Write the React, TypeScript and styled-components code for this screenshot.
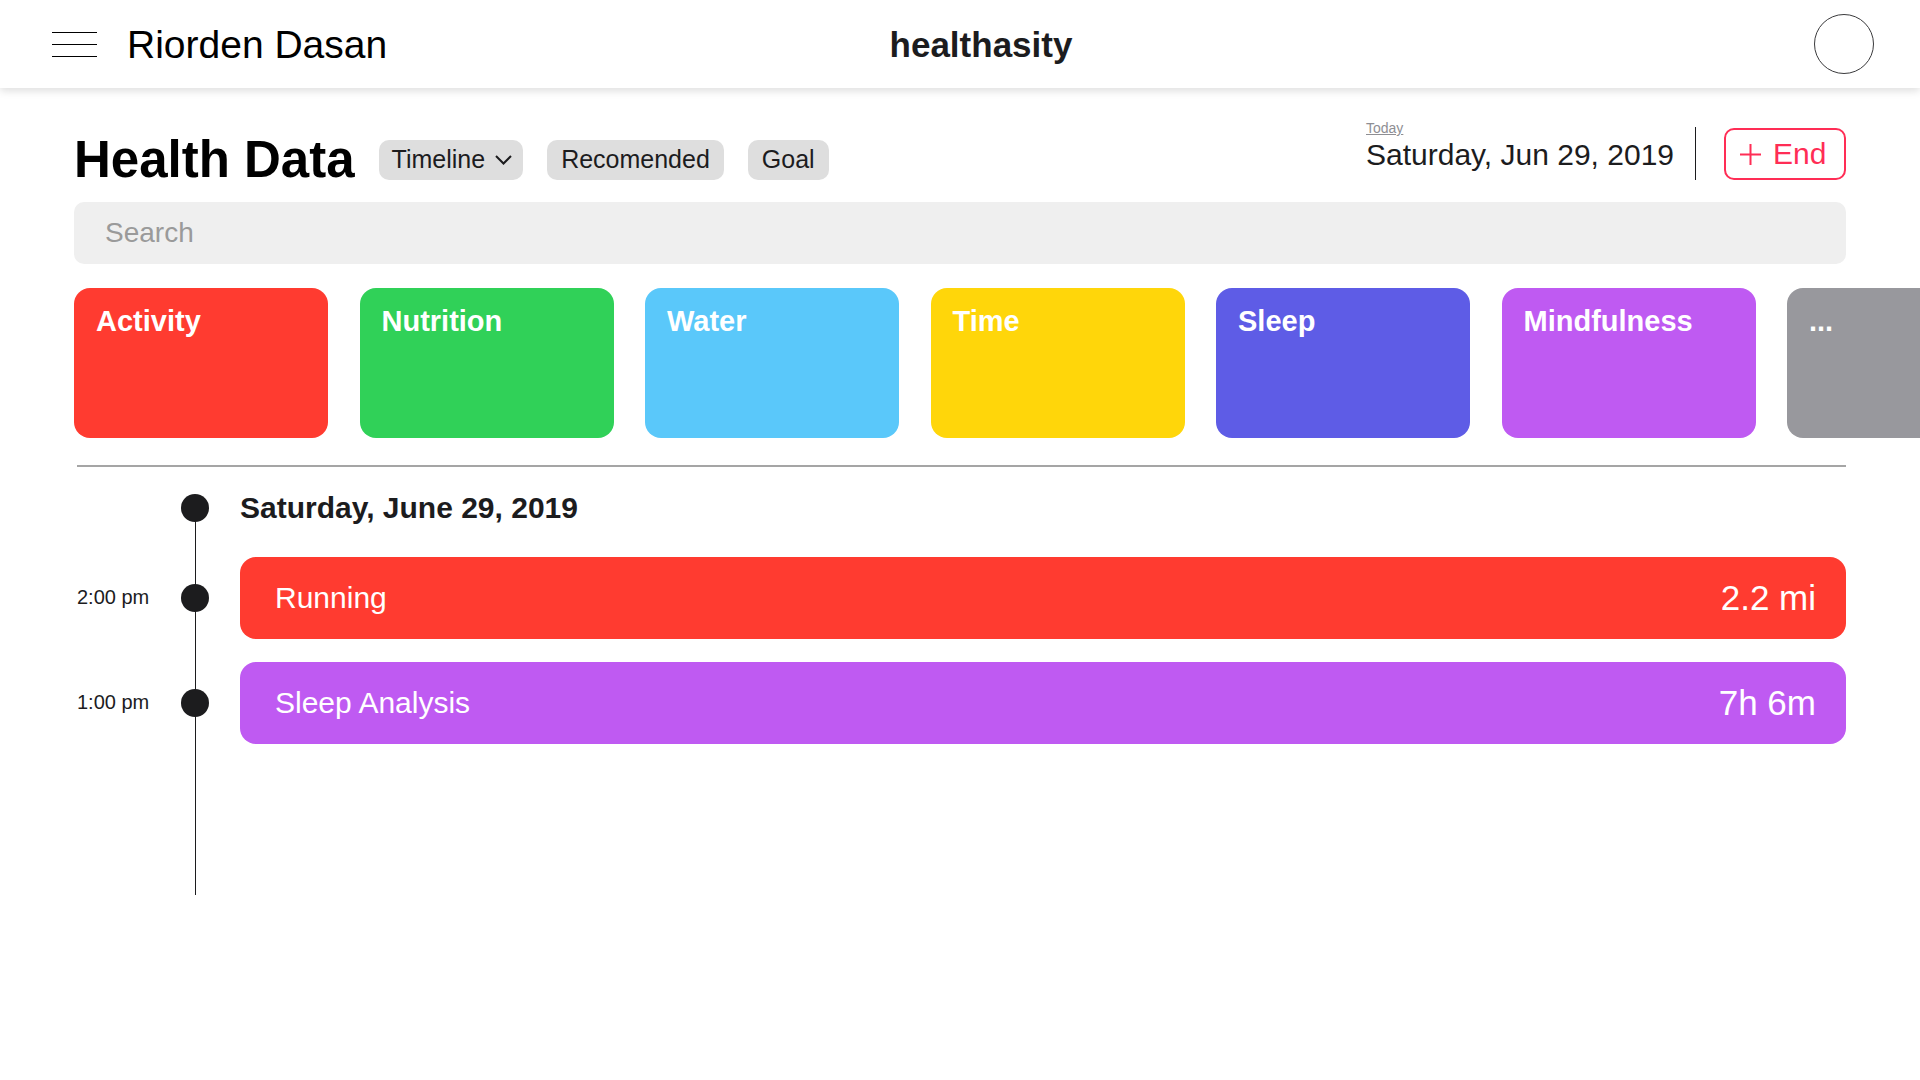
import React from "react";
import styled, { createGlobalStyle } from "styled-components";

const GlobalStyle = createGlobalStyle`
  html, body {
    margin: 0;
    padding: 0;
    background: #ffffff;
    font-family: "Liberation Sans", Arial, Helvetica, sans-serif;
    color: #1c1c1e;
    overflow-x: hidden;
  }
  * { box-sizing: border-box; }
`;

const Page = styled.div`
  min-height: 1080px;
  background: #ffffff;
`;

const Header = styled.header`
  position: relative;
  z-index: 2;
  height: 88px;
  display: grid;
  grid-template-columns: 1fr auto 1fr;
  align-items: center;
  padding: 0 46px 0 52px;
  background: #ffffff;
  box-shadow: 0 3px 8px rgba(0, 0, 0, 0.13);
`;

const HeaderLeft = styled.div`
  display: flex;
  align-items: center;
  gap: 30px;
`;

const MenuButton = styled.button`
  display: flex;
  padding: 0;
  border: none;
  background: none;
  cursor: pointer;
`;

const UserName = styled.span`
  font-size: 39px;
  line-height: 1;
  color: #000000;
  margin-top: 1px;
`;

const Brand = styled.span`
  margin-left: 36px;
  font-size: 35px;
  font-weight: 700;
  line-height: 1;
  color: #1c1c1e;
`;

const Avatar = styled.div`
  justify-self: end;
  width: 60px;
  height: 60px;
  border-radius: 50%;
  border: 1px solid #3a3a3c;
`;

const Main = styled.main`
  padding: 33px 74px 0;
`;

const TitleRow = styled.div`
  display: flex;
  justify-content: space-between;
  align-items: flex-start;
`;

const LeftGroup = styled.div`
  display: flex;
  align-items: center;
  margin-top: 13px;
`;

const Title = styled.h1`
  margin: 0 24px 0 0;
  font-size: 51px;
  font-weight: 700;
  line-height: 1;
  color: #000000;
`;

const Chips = styled.div`
  display: flex;
  gap: 24px;
`;

const Chip = styled.button<{ $dropdown?: boolean }>`
  display: flex;
  align-items: center;
  gap: 10px;
  height: 40px;
  padding: ${(p) => (p.$dropdown ? "0 11px 0 13px" : "0 14px")};
  border: none;
  border-radius: 10px;
  background: #dedede;
  font-family: inherit;
  font-size: 25px;
  line-height: 1;
  color: #1c1c1e;
  cursor: pointer;
`;

const RightGroup = styled.div`
  display: flex;
  align-items: flex-start;
`;

const DateBlock = styled.div`
  display: flex;
  flex-direction: column;
  align-items: flex-start;
`;

const TodayLink = styled.a`
  font-size: 14px;
  line-height: 1;
  color: #8e8e93;
  text-decoration: underline;
`;

const DateText = styled.span`
  margin-top: 5px;
  font-size: 30px;
  line-height: 1;
  color: #1c1c1e;
`;

const VDivider = styled.div`
  width: 1px;
  height: 53px;
  margin: 6px 28px 0 21px;
  background: #1c1c1e;
`;

const EndButton = styled.button`
  display: flex;
  align-items: center;
  gap: 12px;
  width: 122px;
  height: 52px;
  margin-top: 7px;
  padding: 0 0 0 14px;
  border: 2px solid #ff2d55;
  border-radius: 10px;
  background: #ffffff;
  font-family: inherit;
  font-size: 30px;
  line-height: 1;
  color: #ff2d55;
  cursor: pointer;
`;

const SearchInput = styled.input`
  display: block;
  width: 100%;
  height: 62px;
  margin-top: 17px;
  padding: 0 31px;
  border: none;
  border-radius: 10px;
  background: #efefef;
  font-family: inherit;
  font-size: 28px;
  color: #1c1c1e;
  outline: none;
  &::placeholder {
    color: #9a9a9a;
  }
`;

const CardRow = styled.div`
  display: flex;
  gap: 31.5px;
  margin: 24px -74px 0 0;
  overflow: hidden;
`;

const Card = styled.div<{ $color: string }>`
  flex: 0 0 254px;
  height: 150px;
  padding: 17px 22px;
  border-radius: 16px;
  background: ${(p) => p.$color};
  color: #ffffff;
  font-size: 29px;
  font-weight: 700;
`;

const Separator = styled.hr`
  height: 2px;
  margin: 27px 0 0 3px;
  border: none;
  background: #a5a5a5;
`;

const Timeline = styled.div`
  margin-top: 3px;
  display: flex;
  flex-direction: column;
`;

const Row = styled.div<{ $height?: number }>`
  display: grid;
  grid-template-columns: 107px 28px 1fr;
  align-items: stretch;
  ${(p) => (p.$height ? `height: ${p.$height}px;` : "")}
`;

const TimeLabel = styled.span`
  align-self: center;
  padding-left: 3px;
  font-size: 20px;
  color: #1c1c1e;
`;

const Rail = styled.div<{ $from?: "center" | "top" }>`
  display: flex;
  align-items: center;
  justify-content: center;
  background-image: linear-gradient(#1c1c1e, #1c1c1e);
  background-repeat: no-repeat;
  background-size: ${(p) => (p.$from === "center" ? "1px 50%" : "1px 100%")};
  background-position: center bottom;
`;

const Dot = styled.span`
  width: 28px;
  height: 28px;
  border-radius: 50%;
  background: #1c1c1e;
`;

const DayHeading = styled.h2`
  align-self: center;
  margin: 0 0 0 31px;
  font-size: 30px;
  font-weight: 700;
  line-height: 1;
  color: #1c1c1e;
`;

const EntryBar = styled.div<{ $color: string }>`
  display: flex;
  align-items: center;
  justify-content: space-between;
  height: 82px;
  margin: 11.5px 0 11.5px 31px;
  padding: 0 30px 0 35px;
  border-radius: 16px;
  background: ${(p) => p.$color};
  color: #ffffff;
`;

const EntryName = styled.span`
  font-size: 30px;
`;

const EntryValue = styled.span`
  font-size: 35px;
`;

const MenuIcon = () => (
  <svg width="45" height="25" viewBox="0 0 45 25" aria-hidden="true">
    <path d="M0 0.5H45M0 12.5H45M0 24.5H45" stroke="#000" strokeWidth="1" />
  </svg>
);

const ChevronIcon = () => (
  <svg width="17" height="10" viewBox="0 0 17 10" aria-hidden="true">
    <path d="M1 1L8.5 8.5L16 1" fill="none" stroke="#1c1c1e" strokeWidth="2" />
  </svg>
);

const PlusIcon = () => (
  <svg width="21" height="21" viewBox="0 0 21 21" aria-hidden="true">
    <path d="M10.5 0V21M0 10.5H21" stroke="#ff2d55" strokeWidth="2" />
  </svg>
);

const categories = [
  { name: "Activity", color: "#ff3b30" },
  { name: "Nutrition", color: "#30d158" },
  { name: "Water", color: "#5ac8fa" },
  { name: "Time", color: "#ffd60a" },
  { name: "Sleep", color: "#5e5ce6" },
  { name: "Mindfulness", color: "#bf5af2" },
  { name: "...", color: "#98989d" },
];

const entries = [
  { time: "2:00 pm", name: "Running", value: "2.2 mi", color: "#ff3b30" },
  { time: "1:00 pm", name: "Sleep Analysis", value: "7h 6m", color: "#bf5af2" },
];

export default function App() {
  return (
    <Page>
      <GlobalStyle />
      <Header>
        <HeaderLeft>
          <MenuButton aria-label="Menu">
            <MenuIcon />
          </MenuButton>
          <UserName>Riorden Dasan</UserName>
        </HeaderLeft>
        <Brand>healthasity</Brand>
        <Avatar />
      </Header>
      <Main>
        <TitleRow>
          <LeftGroup>
            <Title>Health Data</Title>
            <Chips>
              <Chip $dropdown>
                Timeline
                <ChevronIcon />
              </Chip>
              <Chip>Recomended</Chip>
              <Chip>Goal</Chip>
            </Chips>
          </LeftGroup>
          <RightGroup>
            <DateBlock>
              <TodayLink>Today</TodayLink>
              <DateText>Saturday, Jun 29, 2019</DateText>
            </DateBlock>
            <VDivider />
            <EndButton>
              <PlusIcon />
              End
            </EndButton>
          </RightGroup>
        </TitleRow>
        <SearchInput placeholder="Search" />
        <CardRow>
          {categories.map((c) => (
            <Card key={c.name} $color={c.color}>
              {c.name}
            </Card>
          ))}
        </CardRow>
        <Separator />
        <Timeline>
          <Row $height={75}>
            <span />
            <Rail $from="center">
              <Dot />
            </Rail>
            <DayHeading>Saturday, June 29, 2019</DayHeading>
          </Row>
          {entries.map((e) => (
            <Row key={e.name}>
              <TimeLabel>{e.time}</TimeLabel>
              <Rail>
                <Dot />
              </Rail>
              <EntryBar $color={e.color}>
                <EntryName>{e.name}</EntryName>
                <EntryValue>{e.value}</EntryValue>
              </EntryBar>
            </Row>
          ))}
          <Row $height={140}>
            <span />
            <Rail />
            <span />
          </Row>
        </Timeline>
      </Main>
    </Page>
  );
}
